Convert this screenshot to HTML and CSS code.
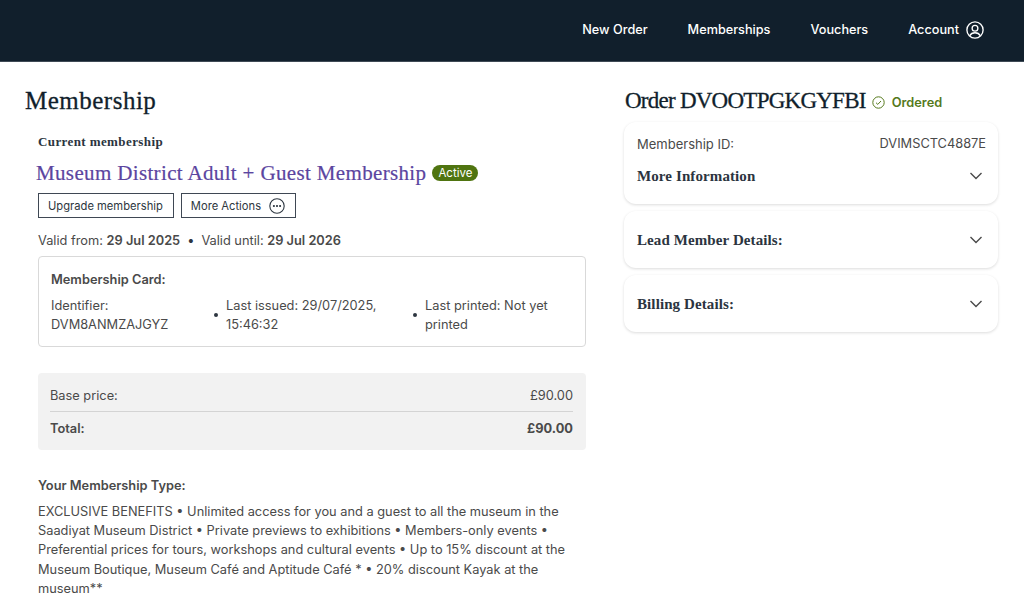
FILE: index.html
```html
<!DOCTYPE html>
<html lang="en">
<head>
  <meta charset="UTF-8">
  <title>Membership</title>
  <link rel="stylesheet" href="styles.css">
</head>
<body>
  <header class="topbar">
    <nav class="topnav">
      <a href="#">New Order</a>
      <a href="#">Memberships</a>
      <a href="#">Vouchers</a>
      <a href="#" class="account">Account
        <svg width="18" height="18" viewBox="0 0 20 20" fill="none" stroke="currentColor" stroke-width="1.5">
          <circle cx="10" cy="10" r="9"/>
          <circle cx="10" cy="8" r="3.2"/>
          <path d="M4.2 16.300c1-2.200 3.200-3.300 5.800-3.300s4.800 1.100 5.800 3.300"/>
        </svg>
      </a>
    </nav>
  </header>

  <main class="page">
    <section class="left">
      <h1>Membership</h1>
      <div class="membership">
        <h3 class="eyebrow">Current membership</h3>
        <div class="title-row">
          <h2 class="member-title">Museum District Adult + Guest Membership</h2>
          <span class="pill">Active</span>
        </div>
        <div class="actions">
          <button class="btn">Upgrade membership</button>
          <button class="btn">More Actions
            <svg width="16" height="16" viewBox="0 0 16 16" fill="none" stroke="currentColor" stroke-width="1.1">
              <circle cx="8" cy="8" r="7.2"/>
              <circle cx="4.900" cy="8" r=".5" fill="currentColor"/>
              <circle cx="8" cy="8" r=".5" fill="currentColor"/>
              <circle cx="11.100" cy="8" r=".5" fill="currentColor"/>
            </svg>
          </button>
        </div>
        <p class="validity">Valid from: <b>29 Jul 2025</b><span class="sep">•</span>Valid until: <b>29 Jul 2026</b></p>

        <div class="card-box">
          <h4>Membership Card:</h4>
          <div class="card-cols">
            <div class="card-col first">Identifier:<br>DVM8ANMZAJGYZ</div>
            <span class="dot"></span>
            <div class="card-col">Last issued: 29/07/2025, 15:46:32</div>
            <span class="dot"></span>
            <div class="card-col last">Last printed: Not yet printed</div>
          </div>
        </div>

        <div class="price-box">
          <div class="price-row base"><span>Base price:</span><span>£90.00</span></div>
          <div class="price-row total"><span>Total:</span><span>£90.00</span></div>
        </div>

        <h4 class="type-title">Your Membership Type:</h4>
        <p class="type-text">EXCLUSIVE BENEFITS • Unlimited access for you and a guest to all the museum in the Saadiyat Museum District • Private previews to exhibitions • Members-only events • Preferential prices for tours, workshops and cultural events • Up to 15% discount at the Museum Boutique, Museum Café and Aptitude Café * • 20% discount Kayak at the museum**</p>
      </div>
    </section>

    <aside class="right">
      <div class="order-head">
        <h1>Order DVOOTPGKGYFBI</h1>
        <span class="status">
          <svg width="13" height="13" viewBox="0 0 13 13" fill="none" stroke="currentColor" stroke-width="1">
            <circle cx="6.500" cy="6.500" r="5.700"/>
            <path d="M4 6.700l1.800 1.700L9 5"/>
          </svg>
          Ordered
        </span>
      </div>

      <div class="panel first-panel">
        <div class="id-row"><span class="id-label">Membership ID:</span><span>DVIMSCTC4887E</span></div>
        <div class="panel-row">
          <span class="panel-title">More Information</span>
          <svg class="chev" width="14" height="8" viewBox="0 0 14 8" fill="none" stroke="currentColor" stroke-width="1.400"><path d="M1.500 1l5.500 5.500L12.500 1"/></svg>
        </div>
      </div>
      <div class="panel">
        <div class="panel-row">
          <span class="panel-title">Lead Member Details:</span>
          <svg class="chev" width="14" height="8" viewBox="0 0 14 8" fill="none" stroke="currentColor" stroke-width="1.400"><path d="M1.500 1l5.500 5.500L12.500 1"/></svg>
        </div>
      </div>
      <div class="panel">
        <div class="panel-row">
          <span class="panel-title">Billing Details:</span>
          <svg class="chev" width="14" height="8" viewBox="0 0 14 8" fill="none" stroke="currentColor" stroke-width="1.400"><path d="M1.500 1l5.500 5.500L12.500 1"/></svg>
        </div>
      </div>
    </aside>
  </main>
</body>
</html>
```

FILE: styles.css
```css
* {
  box-sizing: border-box;
}
body {
  margin: 0;
  font-family: Inter, "Liberation Sans", sans-serif;
  font-size: 12.8px;
  color: #4a4a4a;
  background: #fff;
  overflow: hidden;
  height: 615px;
}
h1, h2, h3, h4, p {
  margin: 0;
}

.topbar {
  height: 62px;
  background: #111f2c;
  border-bottom: 1px solid #3e4a55;
  display: flex;
  justify-content: flex-end;
  align-items: center;
  padding: 0 40px 2px 0;
}
.topnav {
  display: flex;
  align-items: center;
  gap: 40px;
}
.topnav a {
  color: #fff;
  text-decoration: none;
  font-size: 12.7px;
  font-weight: 500;
}
.account {
  display: flex;
  align-items: center;
  gap: 7px;
}

.page {
  display: grid;
  grid-template-columns: 561px 374px;
  column-gap: 38px;
  padding: 0 26px 0 25px;
}

.left h1, .order-head h1 {
  font-family: "Liberation Serif", serif;
  font-size: 25px;
  font-weight: 400;
  color: #111f2c;
  line-height: 30px;
  letter-spacing: 0.5px;
  -webkit-text-stroke: 0.3px #111f2c;
}
.left h1 {
  margin-top: 24px;
}
.order-head h1 {
  font-size: 23px;
  letter-spacing: -0.75px;
  margin-left: 1px;
}
.membership {
  padding-left: 13px;
}
.eyebrow {
  font-family: "Liberation Serif", serif;
  font-size: 13px;
  font-weight: 700;
  letter-spacing: 0.4px;
  color: #2b3440;
  line-height: 16px;
  margin-top: 18px;
}
.title-row {
  display: flex;
  align-items: center;
  gap: 6px;
  margin-top: 10px;
  margin-left: -2px;
}
.member-title {
  font-family: "Liberation Serif", serif;
  font-size: 21px;
  font-weight: 400;
  letter-spacing: 0.35px;
  -webkit-text-stroke: 0.2px #5b45a0;
  color: #5b45a0;
  line-height: 26px;
}
.pill {
  background: #4f7410;
  color: #fff;
  font-size: 11.5px;
  line-height: 16px;
  padding: 0 6px;
  border-radius: 8px;
}
.actions {
  display: flex;
  gap: 7px;
  margin-top: 7px;
}
.btn {
  display: flex;
  align-items: center;
  gap: 8px;
  height: 25px;
  padding: 0 10px 0 9px;
  background: #fff;
  border: 1px solid #3f4854;
  border-radius: 0;
  color: #2d3640;
  font-family: inherit;
  font-size: 11.2px;
}
.validity {
  margin-top: 14px;
  line-height: 18px;
}
.validity b {
  font-weight: 600;
}
.sep {
  margin: 0 7px;
  color: #2d3640;
}

.card-box {
  margin-top: 6px;
  height: 91px;
  border: 1px solid #d9d9d9;
  border-radius: 4px;
  padding: 14px 12px 0;
}
.card-box h4 {
  font-size: 12.8px;
  font-weight: 600;
  line-height: 18px;
}
.card-cols {
  display: flex;
  align-items: center;
  margin-top: 7px;
  line-height: 19px;
}
.card-col {
  width: 184px;
}
.card-col.first {
  width: 160px;
}
.card-col.last {
  width: 147px;
}
.dot {
  width: 4px;
  height: 4px;
  border-radius: 50%;
  background: #2d3640;
  margin: 0 8px 0 3px;
}

.price-box {
  margin-top: 26px;
  height: 77px;
  background: #f2f2f2;
  border-radius: 4px;
  padding: 0 13px 0 12px;
}
.price-row {
  display: flex;
  justify-content: space-between;
}
.price-row.base {
  border-bottom: 1px solid #d4d4d4;
  height: 39px;
  line-height: 46px;
}
.price-row.total {
  font-weight: 600;
  line-height: 33px;
}
.price-row.total span:last-child {
  font-weight: 700;
}

.type-title {
  font-size: 12.8px;
  font-weight: 600;
  line-height: 18px;
  margin-top: 27px;
}
.type-text {
  margin-top: 7px;
  line-height: 19.2px;
}

.order-head {
  display: flex;
  align-items: center;
  gap: 6px;
  margin-top: 24px;
}
.status {
  display: flex;
  align-items: center;
  gap: 7px;
  color: #55791b;
  font-weight: 600;
  font-size: 12.8px;
  padding-top: 2px;
}
.panel {
  border-radius: 12px;
  background: #fff;
  box-shadow: 0 1px 3px rgba(0, 0, 0, 0.14);
  padding: 0 12px 0 13px;
  height: 57px;
  margin-top: 7px;
  display: flex;
  flex-direction: column;
  justify-content: center;
}
.first-panel {
  height: 82px;
  margin-top: 6px;
  justify-content: flex-start;
  padding-top: 13px;
}
.id-row {
  display: flex;
  justify-content: space-between;
  line-height: 18px;
}
.id-label {
  font-size: 13px;
}
.first-panel .panel-row {
  margin-top: 14px;
}
.panel-row {
  display: flex;
  justify-content: space-between;
  align-items: center;
}
.panel-title {
  font-family: "Liberation Serif", serif;
  font-size: 15px;
  font-weight: 700;
  letter-spacing: 0.1px;
  color: #2b3440;
  line-height: 18px;
}
.chev {
  color: #4a4a4a;
  margin-right: 3px;
}
```
